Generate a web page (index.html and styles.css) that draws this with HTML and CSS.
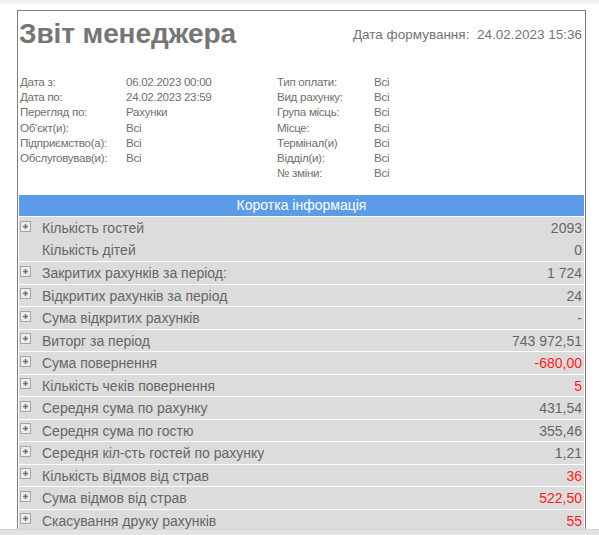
FILE: index.html
```html
<!DOCTYPE html>
<html lang="uk">
<head>
<meta charset="utf-8">
<title>Звіт менеджера</title>
<link rel="stylesheet" href="styles.css">
</head>
<body>
<div class="topshade"></div>
<div class="report">
  <div class="head">
    <h1 class="title">Звіт менеджера</h1>
    <div class="gen">Дата формування:&nbsp; 24.02.2023 15:36</div>
  </div>
  <div class="params">
    <div class="pcol pcol-left">
      <span class="pl">Дата з:</span><span class="pv">06.02.2023 00:00</span>
      <span class="pl">Дата по:</span><span class="pv">24.02.2023 23:59</span>
      <span class="pl">Перегляд по:</span><span class="pv">Рахунки</span>
      <span class="pl">Об'єкт(и):</span><span class="pv">Всі</span>
      <span class="pl">Підприємство(а):</span><span class="pv">Всі</span>
      <span class="pl">Обслуговував(и):</span><span class="pv">Всі</span>
    </div>
    <div class="pcol pcol-right">
      <span class="pl">Тип оплати:</span><span class="pv">Всі</span>
      <span class="pl">Вид рахунку:</span><span class="pv">Всі</span>
      <span class="pl">Група місць:</span><span class="pv">Всі</span>
      <span class="pl">Місце:</span><span class="pv">Всі</span>
      <span class="pl">Термінал(и)</span><span class="pv">Всі</span>
      <span class="pl">Відділ(и):</span><span class="pv">Всі</span>
      <span class="pl">№ зміни:</span><span class="pv">Всі</span>
    </div>
  </div>
  <div class="summary">
    <div class="sum-head">Коротка інформація</div>
    <div class="group">
      <div class="row"><span class="ico"><svg width="11" height="11" viewBox="0 0 11 11"><rect x="0.5" y="0.5" width="10" height="10" fill="#ececec" stroke="#a6a6a6"/><path d="M3 5.5h5M5.5 3v5" stroke="#707070" stroke-width="1.4"/></svg></span><span class="lbl">Кількість гостей</span><span class="val">2093</span></div>
      <div class="row"><span class="ico"></span><span class="lbl">Кількість дітей</span><span class="val">0</span></div>
    </div>
    <div class="group">
      <div class="row"><span class="ico"><svg width="11" height="11" viewBox="0 0 11 11"><rect x="0.5" y="0.5" width="10" height="10" fill="#ececec" stroke="#a6a6a6"/><path d="M3 5.5h5M5.5 3v5" stroke="#707070" stroke-width="1.4"/></svg></span><span class="lbl">Закритих рахунків за період:</span><span class="val">1 724</span></div>
    </div>
    <div class="group">
      <div class="row"><span class="ico"><svg width="11" height="11" viewBox="0 0 11 11"><rect x="0.5" y="0.5" width="10" height="10" fill="#ececec" stroke="#a6a6a6"/><path d="M3 5.5h5M5.5 3v5" stroke="#707070" stroke-width="1.4"/></svg></span><span class="lbl">Відкритих рахунків за період</span><span class="val">24</span></div>
    </div>
    <div class="group">
      <div class="row"><span class="ico"><svg width="11" height="11" viewBox="0 0 11 11"><rect x="0.5" y="0.5" width="10" height="10" fill="#ececec" stroke="#a6a6a6"/><path d="M3 5.5h5M5.5 3v5" stroke="#707070" stroke-width="1.4"/></svg></span><span class="lbl">Сума відкритих рахунків</span><span class="val">-</span></div>
    </div>
    <div class="group">
      <div class="row"><span class="ico"><svg width="11" height="11" viewBox="0 0 11 11"><rect x="0.5" y="0.5" width="10" height="10" fill="#ececec" stroke="#a6a6a6"/><path d="M3 5.5h5M5.5 3v5" stroke="#707070" stroke-width="1.4"/></svg></span><span class="lbl">Виторг за період</span><span class="val">743 972,51</span></div>
    </div>
    <div class="group">
      <div class="row"><span class="ico"><svg width="11" height="11" viewBox="0 0 11 11"><rect x="0.5" y="0.5" width="10" height="10" fill="#ececec" stroke="#a6a6a6"/><path d="M3 5.5h5M5.5 3v5" stroke="#707070" stroke-width="1.4"/></svg></span><span class="lbl">Сума повернення</span><span class="val neg">-680,00</span></div>
    </div>
    <div class="group">
      <div class="row"><span class="ico"><svg width="11" height="11" viewBox="0 0 11 11"><rect x="0.5" y="0.5" width="10" height="10" fill="#ececec" stroke="#a6a6a6"/><path d="M3 5.5h5M5.5 3v5" stroke="#707070" stroke-width="1.4"/></svg></span><span class="lbl">Кількість чеків повернення</span><span class="val neg">5</span></div>
    </div>
    <div class="group">
      <div class="row"><span class="ico"><svg width="11" height="11" viewBox="0 0 11 11"><rect x="0.5" y="0.5" width="10" height="10" fill="#ececec" stroke="#a6a6a6"/><path d="M3 5.5h5M5.5 3v5" stroke="#707070" stroke-width="1.4"/></svg></span><span class="lbl">Середня сума по рахунку</span><span class="val">431,54</span></div>
    </div>
    <div class="group">
      <div class="row"><span class="ico"><svg width="11" height="11" viewBox="0 0 11 11"><rect x="0.5" y="0.5" width="10" height="10" fill="#ececec" stroke="#a6a6a6"/><path d="M3 5.5h5M5.5 3v5" stroke="#707070" stroke-width="1.4"/></svg></span><span class="lbl">Середня сума по гостю</span><span class="val">355,46</span></div>
    </div>
    <div class="group">
      <div class="row"><span class="ico"><svg width="11" height="11" viewBox="0 0 11 11"><rect x="0.5" y="0.5" width="10" height="10" fill="#ececec" stroke="#a6a6a6"/><path d="M3 5.5h5M5.5 3v5" stroke="#707070" stroke-width="1.4"/></svg></span><span class="lbl">Середня кіл-сть гостей по рахунку</span><span class="val">1,21</span></div>
    </div>
    <div class="group">
      <div class="row"><span class="ico"><svg width="11" height="11" viewBox="0 0 11 11"><rect x="0.5" y="0.5" width="10" height="10" fill="#ececec" stroke="#a6a6a6"/><path d="M3 5.5h5M5.5 3v5" stroke="#707070" stroke-width="1.4"/></svg></span><span class="lbl">Кількість відмов від страв</span><span class="val neg">36</span></div>
    </div>
    <div class="group">
      <div class="row"><span class="ico"><svg width="11" height="11" viewBox="0 0 11 11"><rect x="0.5" y="0.5" width="10" height="10" fill="#ececec" stroke="#a6a6a6"/><path d="M3 5.5h5M5.5 3v5" stroke="#707070" stroke-width="1.4"/></svg></span><span class="lbl">Сума відмов від страв</span><span class="val neg">522,50</span></div>
    </div>
    <div class="group">
      <div class="row"><span class="ico"><svg width="11" height="11" viewBox="0 0 11 11"><rect x="0.5" y="0.5" width="10" height="10" fill="#ececec" stroke="#a6a6a6"/><path d="M3 5.5h5M5.5 3v5" stroke="#707070" stroke-width="1.4"/></svg></span><span class="lbl">Скасування друку рахунків</span><span class="val neg">55</span></div>
    </div>
  </div>
</div>
<div class="bottombar"></div>
</body>
</html>
```

FILE: styles.css
```css
html, body {
  margin: 0;
  padding: 0;
  background: #ffffff;
  overflow: hidden;
  height: 535px;
}
body {
  font-family: "Liberation Sans", Arial, sans-serif;
  color: #6e6e6e;
  position: relative;
}
.topshade {
  position: absolute;
  left: 0;
  top: 0;
  width: 100%;
  height: 6px;
  background: linear-gradient(#ececec, rgba(255,255,255,0));
}
.report {
  box-sizing: border-box;
  margin: 10px 0 0 17px;
  width: 569px;
  border-top: 1px solid #7f7f7f;
  border-left: 1px solid #7f7f7f;
  border-right: 1px solid #7a7a7a;
  padding: 0 1px;
  height: 540px;
}
.head {
  display: flex;
  justify-content: space-between;
  align-items: flex-start;
}
.title {
  margin: 6px 0 0 0;
  font-size: 28px;
  font-weight: bold;
  color: #757575;
  line-height: 34px;
  letter-spacing: -0.1px;
}
.gen {
  margin: 16px 2px 0 0;
  font-size: 13.5px;
  line-height: 16px;
  color: #737373;
}
.params {
  display: grid;
  grid-template-columns: 257px 1fr;
  align-items: start;
  margin-top: 23px;
  padding-left: 1px;
}
.pcol {
  display: grid;
  align-content: start;
  font-size: 11.6px;
  line-height: 15.2px;
  color: #6f6f6f;
  letter-spacing: -0.3px;
}
.pcol-left { grid-template-columns: 106px 1fr; }
.pcol-right { grid-template-columns: 97px 1fr; }
.summary {
  margin-top: 15px;
}
.sum-head {
  background: #5c9be6;
  color: #ffffff;
  text-align: center;
  font-size: 14px;
  line-height: 21px;
  height: 21px;
}
.group {
  border-top: 1px solid #ffffff;
  background: #dcdcdc;
}
.row {
  display: flex;
  align-items: center;
  height: 22.5px;
  font-size: 14px;
  color: #666666;
}
.group .row:first-child { height: 21.5px; }
.ico {
  width: 11px;
  height: 11px;
  margin-left: 1px;
  margin-right: 11px;
  display: flex;
  position: relative;
  top: -2px;
}
.lbl {
  flex: 1;
}
.val {
  margin-right: 2px;
}
.neg { color: #ff1a1a; }
.bottombar {
  position: fixed;
  left: 0;
  bottom: 0;
  width: 100%;
  height: 5px;
  background: #e3e3e3;
  border-top: 1px solid #d4d4d4;
}
```
